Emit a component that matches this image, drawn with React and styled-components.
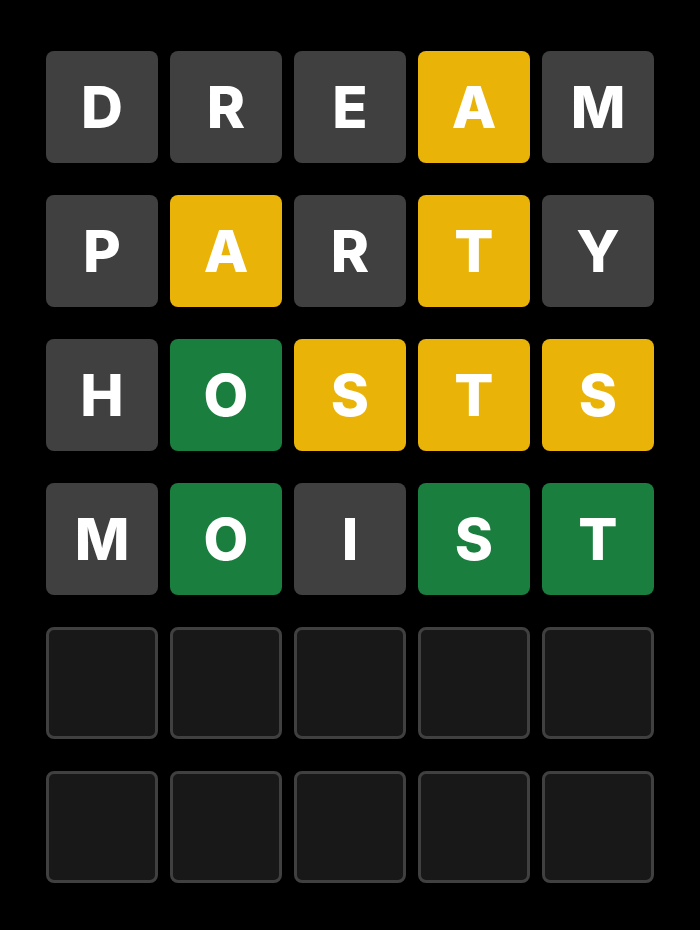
import React from "react";
import styled, { createGlobalStyle } from "styled-components";

const GlobalStyle = createGlobalStyle`
  html, body {
    margin: 0;
    padding: 0;
    background: #000;
  }
`;

const guesses = [
  ["D:x", "R:x", "E:x", "A:y", "M:x"],
  ["P:x", "A:y", "R:x", "T:y", "Y:x"],
  ["H:x", "O:g", "S:y", "T:y", "S:y"],
  ["M:x", "O:g", "I:x", "S:g", "T:g"],
];

const colors = {
  x: "#404040",
  y: "#eab308",
  g: "#1a7f3e",
};

const App = () => {
  const rows = [...guesses, null, null];
  return (
    <>
      <GlobalStyle />
      <Page>
        <Board>
          {rows.map((row, r) => (
            <Row key={r}>
              {row
                ? row.map((cell, c) => {
                    const [letter, state] = cell.split(":");
                    return (
                      <Tile key={c} $bg={colors[state]}>
                        {letter}
                      </Tile>
                    );
                  })
                : [0, 1, 2, 3, 4].map((c) => <EmptyTile key={c} />)}
            </Row>
          ))}
        </Board>
      </Page>
    </>
  );
};

export default App;

const Page = styled.div`
  width: 700px;
  height: 930px;
  background: #000;
  display: flex;
  justify-content: center;
  padding-top: 51px;
  box-sizing: border-box;
`;

const Board = styled.div`
  display: flex;
  flex-direction: column;
  gap: 32px;
`;

const Row = styled.div`
  display: grid;
  grid-template-columns: repeat(5, 112px);
  gap: 12px;
`;

const Tile = styled.div`
  width: 112px;
  height: 112px;
  border-radius: 8px;
  background: ${(p) => p.$bg};
  display: flex;
  align-items: center;
  justify-content: center;
  color: #fff;
  font-family: Inter, "Liberation Sans", sans-serif;
  font-weight: 800;
  font-size: 58px;
  line-height: 1;
`;

const EmptyTile = styled.div`
  width: 112px;
  height: 112px;
  box-sizing: border-box;
  border-radius: 8px;
  border: 3px solid #404040;
  background: #181818;
`;
